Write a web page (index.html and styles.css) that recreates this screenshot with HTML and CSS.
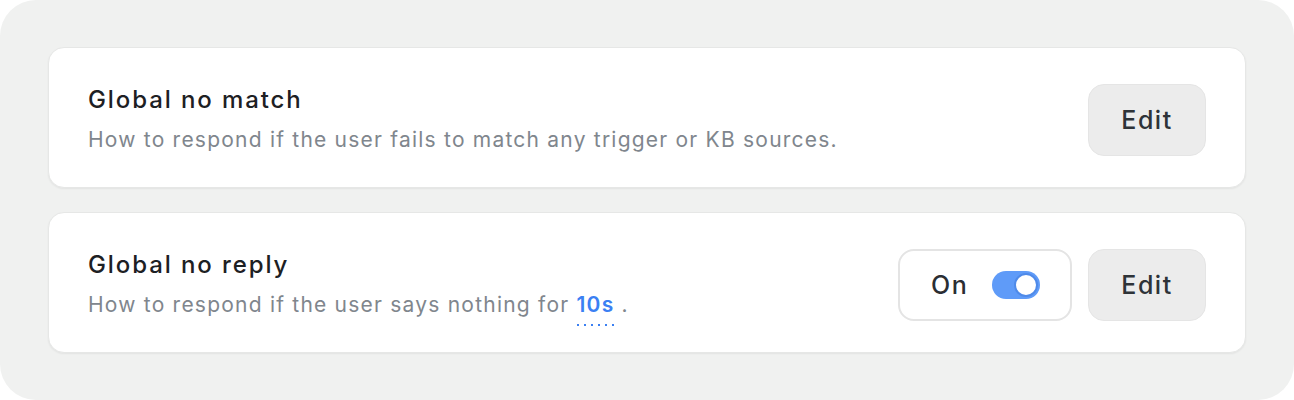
FILE: index.html
```html
<!DOCTYPE html>
<html>
<head>
<meta charset="utf-8">
<link rel="stylesheet" href="styles.css">
</head>
<body>
<div class="panel">
  <div class="card">
    <div class="text">
      <div class="title">Global no match</div>
      <div class="desc">How to respond if the user fails to match any trigger or KB sources.</div>
    </div>
    <div class="actions">
      <button class="edit">Edit</button>
    </div>
  </div>
  <div class="card">
    <div class="text">
      <div class="title">Global no reply</div>
      <div class="desc">How to respond if the user says nothing for <span class="link">10s</span> .</div>
    </div>
    <div class="actions">
      <div class="toggle-box">
        <span class="on">On</span>
        <span class="switch"><span class="knob"></span></span>
      </div>
      <button class="edit">Edit</button>
    </div>
  </div>
</div>
</body>
</html>
```

FILE: styles.css
```css
html, body {
  margin: 0;
  padding: 0;
  background: #ffffff;
}
body {
  font-family: "Inter", "Noto Sans", sans-serif;
}
.panel {
  box-sizing: border-box;
  width: 1294px;
  height: 400px;
  background: #f0f1f0;
  border-radius: 36px;
  padding: 47px 48px;
  display: flex;
  flex-direction: column;
  gap: 24px;
}
.card {
  box-sizing: border-box;
  height: 141px;
  background: #ffffff;
  border: 1px solid #e6e7e6;
  border-radius: 16px;
  box-shadow: 0 1px 2px rgba(0, 0, 0, 0.06);
  display: flex;
  align-items: center;
  justify-content: space-between;
  padding: 4px 39px 0;
}
.text {
  display: flex;
  flex-direction: column;
  gap: 10px;
}
.title {
  font-size: 24px;
  line-height: 30px;
  font-weight: 500;
  color: #1d2023;
  letter-spacing: 1.9px;
}
.desc {
  font-size: 21px;
  line-height: 30px;
  color: #80868d;
  letter-spacing: 1.22px;
}
.link {
  color: #3b80f3;
  font-weight: 600;
  padding-bottom: 9px;
  background-image: linear-gradient(to right, #3b80f3 2px, transparent 2px);
  background-size: 7px 2px;
  background-repeat: repeat-x;
  background-position: 0 100%;
}
.actions {
  display: flex;
  align-items: center;
  gap: 16px;
}
.edit {
  box-sizing: border-box;
  width: 118px;
  height: 72px;
  background: #ececec;
  border: 1px solid #e5e5e5;
  border-radius: 16px;
  font-family: inherit;
  font-size: 25px;
  font-weight: 500;
  letter-spacing: 1.5px;
  color: #2e3338;
  padding: 0;
}
.toggle-box {
  box-sizing: border-box;
  width: 174px;
  height: 72px;
  border: 2px solid #e4e4e4;
  border-radius: 16px;
  background: #fff;
  display: flex;
  align-items: center;
  justify-content: space-between;
  padding: 0 30px 0 31px;
}
.on {
  font-size: 25px;
  font-weight: 500;
  letter-spacing: 1.5px;
  color: #2a2e33;
}
.switch {
  box-sizing: border-box;
  width: 48px;
  height: 28px;
  border-radius: 14px;
  background: #5f9bf8;
  display: flex;
  align-items: center;
  justify-content: flex-end;
  padding: 0 2px;
}
.knob {
  box-sizing: border-box;
  width: 24px;
  height: 24px;
  border-radius: 50%;
  background: #ffffff;
  border: 2px solid #4f8ae9;
}
```
